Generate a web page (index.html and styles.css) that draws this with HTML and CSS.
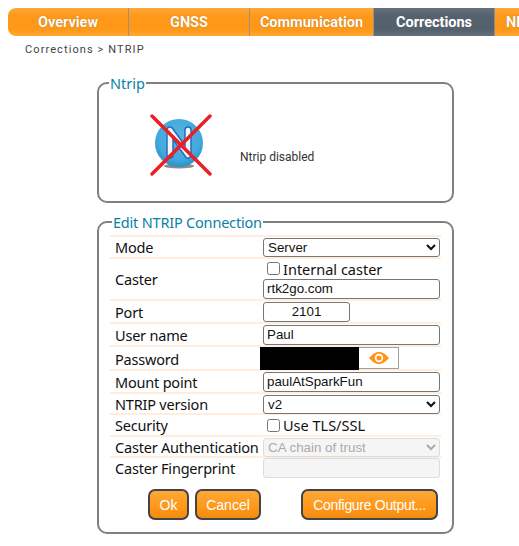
FILE: index.html
```html
<!DOCTYPE html>
<html lang="en">

<head>
	<meta charset="UTF-8">
	<title>Corrections - NTRIP</title>
	<link rel="stylesheet" href="styles.css">
</head>

<body>
	<ul class="menu">
		<li class="tab tab-first">Overview</li>
		<li class="tab">GNSS</li>
		<li class="tab tab-wide">Communication</li>
		<li class="tab active">Corrections</li>
		<li class="tab tab-last">NMEA</li>
	</ul>
	<p class="crumbs">Corrections &gt; NTRIP</p>

	<div class="content">
		<fieldset class="status">
			<legend>Ntrip</legend>
			<svg class="status-icon" width="62" height="62" viewBox="0 0 62 62">
				<defs>
					<radialGradient id="ball" cx="0.5" cy="0.4" r="0.6">
						<stop offset="0" stop-color="#5ab6e2"/>
						<stop offset="0.75" stop-color="#42a8dc"/>
						<stop offset="1" stop-color="#2b8fc4"/>
					</radialGradient>
				</defs>
				<ellipse cx="29" cy="52" rx="15" ry="2.500" fill="#8a8a8a"/>
				<circle cx="29" cy="29" r="24" fill="url(#ball)"/>
				<path d="M20 41V16L38 41V16" fill="none" stroke="#1f6fc0" stroke-width="7.500" stroke-linejoin="round" stroke-linecap="round"/>
				<path d="M20 41V16L38 41V16" fill="none" stroke="#f2f7fc" stroke-width="4.500" stroke-linejoin="round" stroke-linecap="round"/>
				<path d="M2 2L60 60M60 2L2 60" stroke="#ee1c25" stroke-width="3.400" stroke-linecap="round"/>
			</svg>
			<span class="status-text">Ntrip disabled</span>
		</fieldset>

		<fieldset class="edit">
			<legend>Edit NTRIP Connection</legend>
			<div class="form">
				<div class="row row-22">
					<span class="label">Mode</span>
					<select class="wide"><option>Server</option></select>
				</div>
				<div class="row row-42">
					<span class="label">Caster</span>
					<div>
						<label class="check check-caster"><input type="checkbox">Internal caster</label>
						<input class="wide" type="text" value="rtk2go.com">
					</div>
				</div>
				<div class="row">
					<span class="label">Port</span>
					<input class="port" type="text" value="2101">
				</div>
				<div class="row">
					<span class="label">User name</span>
					<input class="wide" type="text" value="Paul">
				</div>
				<div class="row row-24">
					<span class="label">Password</span>
					<div class="pass">
						<span class="redacted"></span>
						<span class="eye-btn">
							<svg width="20" height="12" viewBox="0 0 20 12">
								<path d="M0 6C4 1.500 7 0 10 0S16 1.500 20 6C16 10.500 13 12 10 12S4 10.500 0 6Z" fill="#ff9416"/>
								<circle cx="10" cy="6" r="4.200" fill="#fff"/>
								<circle cx="10" cy="6" r="2.500" fill="#ff9416"/>
							</svg>
						</span>
					</div>
				</div>
				<div class="row">
					<span class="label">Mount point</span>
					<input class="wide" type="text" value="paulAtSparkFun">
				</div>
				<div class="row row-21">
					<span class="label">NTRIP version</span>
					<select class="wide"><option>v2</option></select>
				</div>
				<div class="row row-22">
					<span class="label">Security</span>
					<label class="check"><input type="checkbox">Use TLS/SSL</label>
				</div>
				<div class="row row-21">
					<span class="label">Caster Authentication</span>
					<select class="wide" disabled><option>CA chain of trust</option></select>
				</div>
				<div class="row row-22">
					<span class="label">Caster Fingerprint</span>
					<input class="wide" type="text" disabled>
				</div>
			</div>
			<div class="actions">
				<button class="btn btn-ok">Ok</button>
				<button class="btn btn-cancel">Cancel</button>
				<button class="btn btn-config">Configure Output...</button>
			</div>
		</fieldset>
	</div>
</body>

</html>
```

FILE: styles.css
```css
html,
body {
	overflow: hidden;
}

body {
	margin: 0;
	padding-top: 8px;
	height: 538px;
	background-color: #ffffff;
	font-family: 'Noto Sans', sans-serif;
	font-size: 14.5px;
	color: #111111;
}

.menu {
	display: flex;
	margin: 0 0 0 8px;
	padding: 0;
	height: 28px;
	list-style: none;
	white-space: nowrap;
}

.tab {
	flex: none;
	width: 120px;
	height: 28px;
	border-right: 1px solid #a09080;
	background: linear-gradient(#fca839 0, #ff9818 8px, #ff9818 22px, #fca839 100%);
	color: #ffffff;
	font-family: Roboto, sans-serif;
	font-size: 14.5px;
	font-weight: 700;
	line-height: 30px;
	text-align: center;
	text-shadow: 0 0 1px #a06010;
}

.tab-first {
	border-radius: 8px 0 0 8px;
}

.tab-wide {
	width: 123px;
}

.tab-last {
	padding-left: 11px;
	text-align: left;
}

.tab.active {
	background: linear-gradient(#66717e 0, #56616e 8px, #56616e 22px, #66717e 100%);
	border-right-color: #8a8f95;
	text-shadow: none;
}

.crumbs {
	margin: 7px 0 0 25px;
	font-family: Roboto, sans-serif;
	font-size: 11px;
	line-height: 14px;
	letter-spacing: 1.1px;
	color: #444444;
}

.content {
	margin: 17px 0 0 97px;
	width: 357px;
}

fieldset {
	margin: 0;
	padding: 0;
	border: 2px solid #808080;
	border-radius: 10px;
	box-sizing: border-box;
	min-width: 0;
}

legend {
	padding: 0 1px;
	margin-left: 10px;
	line-height: 18px;
	color: #0a7fa8;
}

.status {
	height: 129px;
}

.status-icon {
	position: absolute;
	margin: 22px 0 0 51px;
}

.status-text {
	display: block;
	margin: 58px 0 0 141px;
	font-family: Roboto, sans-serif;
	font-size: 12px;
	line-height: 14px;
	color: #333333;
}

.edit {
	margin-top: 10px;
	height: 321px;
}

.edit legend {
	margin-left: 13px;
	letter-spacing: -0.2px;
}

.form {
	margin: 4px 0 0 11px;
	width: 331px;
}

.row {
	display: grid;
	grid-template-columns: 148px 1fr;
	align-items: center;
	box-sizing: border-box;
	height: 23px;
	padding-left: 5px;
	border-top: 2px solid #ffeedd;
}

.row-21 {
	height: 21px;
}

.row-22 {
	height: 22px;
}

.row-24 {
	height: 24px;
}

.row-42 {
	height: 42px;
}

.label {
	letter-spacing: -0.2px;
}

.wide,
.port {
	display: block;
	box-sizing: border-box;
	height: 20px;
	margin: 0;
	border: 1px solid #767676;
	border-radius: 3px;
	background-color: #ffffff;
	font-family: 'Liberation Sans', Arial, sans-serif;
	font-size: 13.333px;
	color: #111111;
	padding: 0 3px;
}

.wide {
	width: 177px;
}

.port {
	width: 87px;
	text-align: center;
}

select.wide {
	height: 19px;
	padding: 0;
}

.wide:disabled {
	border-color: #dcdcdc;
	background-color: #f5f5f5;
	color: #aaaaaa;
	opacity: 1;
}

.check {
	display: flex;
	align-items: center;
	height: 18px;
}

.check-caster {
	margin-bottom: 1px;
}

.check input {
	width: 13px;
	height: 13px;
	margin: 0 3px 0 4px;
}

.pass {
	display: flex;
	height: 23px;
	margin-left: -3px;
}

.redacted {
	width: 99px;
	background-color: #000000;
}

.eye-btn {
	display: flex;
	align-items: center;
	justify-content: center;
	box-sizing: border-box;
	width: 40px;
	height: 22px;
	border: 1px solid #a0a0a0;
	border-left: 0;
}

.actions {
	display: flex;
	gap: 6px;
	margin: 11px 0 0 49px;
}

.btn {
	box-sizing: border-box;
	height: 31px;
	padding: 0;
	border: 2px solid #444444;
	border-radius: 7px;
	background: linear-gradient(#fca839 0, #ff9818 60%, #f28c10 100%);
	color: #ffffff;
	font-family: 'Liberation Sans', Arial, sans-serif;
	font-size: 14px;
}

.btn-ok {
	width: 41px;
}

.btn-cancel {
	width: 66px;
}

.btn-config {
	width: 137px;
	margin-left: 34px;
	letter-spacing: -0.3px;
}
```
